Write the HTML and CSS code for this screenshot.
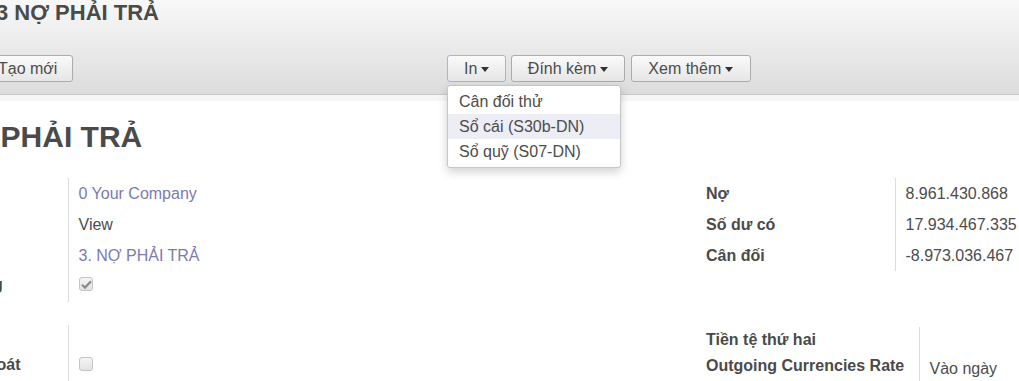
FILE: index.html
```html
<!DOCTYPE html>
<html lang="vi">
<head>
<meta charset="utf-8">
<title>3 NỢ PHẢI TRẢ</title>
<link rel="stylesheet" href="styles.css">
</head>
<body>
<div class="header">
  <div class="crumb">3 NỢ PHẢI TRẢ</div>
  <div class="toolbar">
    <div class="tb-left"><button class="btn">Tạo mới</button></div>
    <div class="tb-side">
      <div class="dd">
        <button class="btn focus">In <span class="caret"></span></button>
        <ul class="menu">
          <li>Cân đối thử</li>
          <li class="hl">Sổ cái (S30b-DN)</li>
          <li>Sổ quỹ (S07-DN)</li>
        </ul>
      </div>
      <button class="btn attach">Đính kèm <span class="caret"></span></button>
      <button class="btn more">Xem thêm <span class="caret"></span></button>
    </div>
  </div>
</div>
<div class="strip"></div>
<div class="sheet">
  <h1 class="title">3 NỢ PHẢI TRẢ</h1>
  <div class="groups">
    <table class="grp gl">
      <tr><td class="lbl">Công ty</td><td class="val"><a class="link">0 Your Company</a></td></tr>
      <tr><td class="lbl">Loại nội bộ</td><td class="val">View</td></tr>
      <tr><td class="lbl">Tài khoản cha</td><td class="val"><a class="link">3. NỢ PHẢI TRẢ</a></td></tr>
      <tr class="rcb"><td class="lbl">Đang hoạt động</td><td class="val"><span class="cb checked"><svg width="11" height="9" viewBox="0 0 11 9"><path d="M1 4.8 L4 7.6 L10 1.2" fill="none" stroke="#8a8a8a" stroke-width="2.2"/></svg></span></td></tr>
    </table>
    <table class="grp gr1">
      <tr><td class="lbl">Nợ</td><td class="val">8.961.430.868</td></tr>
      <tr><td class="lbl">Số dư có</td><td class="val">17.934.467.335</td></tr>
      <tr><td class="lbl">Cân đối</td><td class="val">-8.973.036.467</td></tr>
    </table>
    <table class="grp gl gl2">
      <tr class="r1"><td class="lbl">Loại tiền</td><td class="val"></td></tr>
      <tr class="rcb"><td class="lbl">Cho phép đối soát</td><td class="val"><span class="cb"></span></td></tr>
    </table>
    <table class="grp gr2">
      <tr class="r1"><td class="lbl">Tiền tệ thứ hai</td><td class="val"></td></tr>
      <tr class="r2"><td class="lbl">Outgoing Currencies Rate</td><td class="val sel">Vào ngày</td></tr>
    </table>
  </div>
</div>
</body>
</html>
```
FILE: styles.css
```css
* { box-sizing: border-box; }
html, body { margin: 0; padding: 0; }
body {
  width: 1019px;
  height: 381px;
  overflow: hidden;
  background: #ffffff;
  font-family: "Liberation Sans", Arial, sans-serif;
  font-size: 16px;
  color: #4c4c4c;
}
.header {
  height: 95px;
  background: linear-gradient(to bottom, #f8f8f8 0%, #dcdcdc 100%);
  border-bottom: 1px solid #c9c9c9;
  position: relative;
  z-index: 2;
}
.crumb {
  margin-left: -4px;
  font-size: 22px;
  font-weight: bold;
  line-height: 26px;
  color: #4a4a4a;
  white-space: nowrap;
}
.toolbar {
  display: flex;
  margin-top: 29px;
  margin-left: -18px;
}
.tb-left { width: 465px; flex: none; }
.tb-side { display: flex; gap: 5px; }
.btn {
  font-family: inherit;
  font-size: 16px;
  color: #4c4c4c;
  height: 27px;
  line-height: 25px;
  padding: 0 15px;
  border: 1px solid #ababab;
  border-radius: 3px;
  background: linear-gradient(to bottom, #fafafa 0%, #e6e6e6 100%);
  display: inline-flex;
  align-items: center;
  gap: 4px;
  white-space: nowrap;
  cursor: pointer;
}
.btn.attach { padding: 0 15.5px; }
.btn.more { padding: 0 16.5px; margin-left: 1px; }
.btn.focus {
  border-color: #8dbdf0;
  padding: 0 16px;
}
.caret {
  display: inline-block;
  width: 0;
  height: 0;
  border-left: 4.5px solid transparent;
  border-right: 4.5px solid transparent;
  border-top: 5px solid #333333;
  margin-top: 1px;
}
.dd { position: relative; }
.menu {
  position: absolute;
  top: 30px;
  left: 0;
  width: 174px;
  margin: 0;
  padding: 3px 0 3px;
  list-style: none;
  background: #fff;
  border: 1px solid #c6c6c6;
  border-radius: 3px;
  box-shadow: 0 4px 10px rgba(0,0,0,0.18);
  z-index: 5;
}
.menu li {
  height: 25px;
  line-height: 25px;
  padding-left: 11px;
  color: #4c4c4c;
  white-space: nowrap;
}
.menu li.hl { background: #ededf6; }
.strip {
  height: 6px;
  background: #f6f6f6;
}
.sheet {
  margin-left: -119px;
}
.title {
  margin: 17px 0 22px 39px;
  font-size: 30px;
  line-height: 38px;
  font-weight: bold;
  color: #4a4a4a;
  white-space: nowrap;
}
.groups {
  display: grid;
  grid-template-columns: 825px 320px;
  row-gap: 23px;
  align-items: start;
}
.grp {
  border-collapse: collapse;
}
.grp td {
  padding: 0;
  height: 31px;
  vertical-align: middle;
  white-space: nowrap;
}
.grp .lbl {
  font-weight: bold;
  color: #4a4a4a;
  border-right: 1px solid #dcdcdc;
}
.grp .val {
  padding-left: 10px;
}
.grp .rcb td {
  vertical-align: top;
  padding-top: 5px;
}
.grp .rcb .val { padding-top: 6px; }
.gl .lbl { width: 187px; }
.gr1 .lbl { width: 189px; }
.gr2 { margin-top: 2px; }
.gr2 .lbl { width: 213px; }
.gr2 .r1 td { height: 26px; }
.gl2 .r1 td { height: 26px; }
.gr2 .r2 td { vertical-align: top; padding-top: 4px; height: 31px; }
.gr2 .r2 .sel { padding-top: 7px; }
.link { color: #7c7bad; text-decoration: none; }
.cb {
  display: block;
  width: 14px;
  height: 14px;
  border: 1px solid #c4c4c4;
  border-radius: 3px;
  background: linear-gradient(to bottom, #f4f4f4, #e2e2e2);
}
.cb svg { display: block; margin: 2px 0 0 1px; }
```
